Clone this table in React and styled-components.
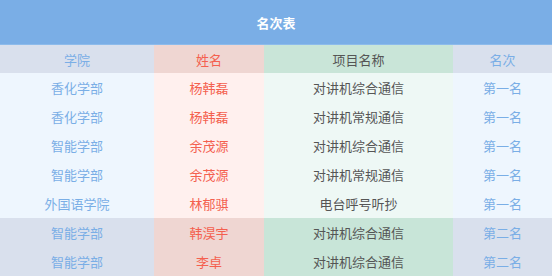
import styled, { createGlobalStyle } from 'styled-components';

const GlobalStyle = createGlobalStyle`
  html, body {
    margin: 0;
    padding: 0;
    background: #ffffff;
  }
  body {
    font-family: "Noto Sans CJK SC", "Noto Sans", sans-serif;
  }
`;

const palette = {
  header: ['#d9e0ed', '#efd6d2', '#c9e5d8', '#d9e0ed'],
  normal: ['#eef6fe', '#fff0ee', '#eef8f5', '#eef6fe'],
  top: ['#d9e0ed', '#efd6d2', '#c8e5d8', '#d9e0ed'],
};

const textColors = ['#7aaee6', '#f4604f', '#555555', '#7aaee6'];

const Board = styled.div`
  width: 552px;
`;

const Title = styled.div`
  height: 45px;
  background: #7aaee6;
  border-bottom: 1px solid #8dbbeb;
  color: #ffffff;
  font-size: 13px;
  font-weight: bold;
  display: flex;
  align-items: center;
  justify-content: center;
  box-sizing: border-box;
  padding-top: 1px;
`;

const Row = styled.div`
  display: grid;
  grid-template-columns: 154px 110px 189px 99px;
  height: ${p => (p.$head ? 28 : 29)}px;
`;

const Cell = styled.div`
  display: flex;
  align-items: center;
  justify-content: center;
  font-size: 13px;
  background: ${p => palette[p.$tier][p.$col]};
  color: ${p => textColors[p.$col]};
`;

const rows = [
  ['香化学部', '杨韩磊', '对讲机综合通信', '第一名', 'normal'],
  ['香化学部', '杨韩磊', '对讲机常规通信', '第一名', 'normal'],
  ['智能学部', '余茂源', '对讲机综合通信', '第一名', 'normal'],
  ['智能学部', '余茂源', '对讲机常规通信', '第一名', 'normal'],
  ['外国语学院', '林郁骐', '电台呼号听抄', '第一名', 'normal'],
  ['智能学部', '韩淏宇', '对讲机综合通信', '第二名', 'top'],
  ['智能学部', '李卓', '对讲机综合通信', '第二名', 'top'],
];

export default function App() {
  return (
    <Board>
      <GlobalStyle />
      <Title>名次表</Title>
      <Row $head>
        {['学院', '姓名', '项目名称', '名次'].map((t, i) => (
          <Cell key={t} $tier="header" $col={i}>{t}</Cell>
        ))}
      </Row>
      {rows.map((r, ri) => (
        <Row key={ri}>
          {r.slice(0, 4).map((t, i) => (
            <Cell key={i} $tier={r[4]} $col={i}>{t}</Cell>
          ))}
        </Row>
      ))}
    </Board>
  );
}
